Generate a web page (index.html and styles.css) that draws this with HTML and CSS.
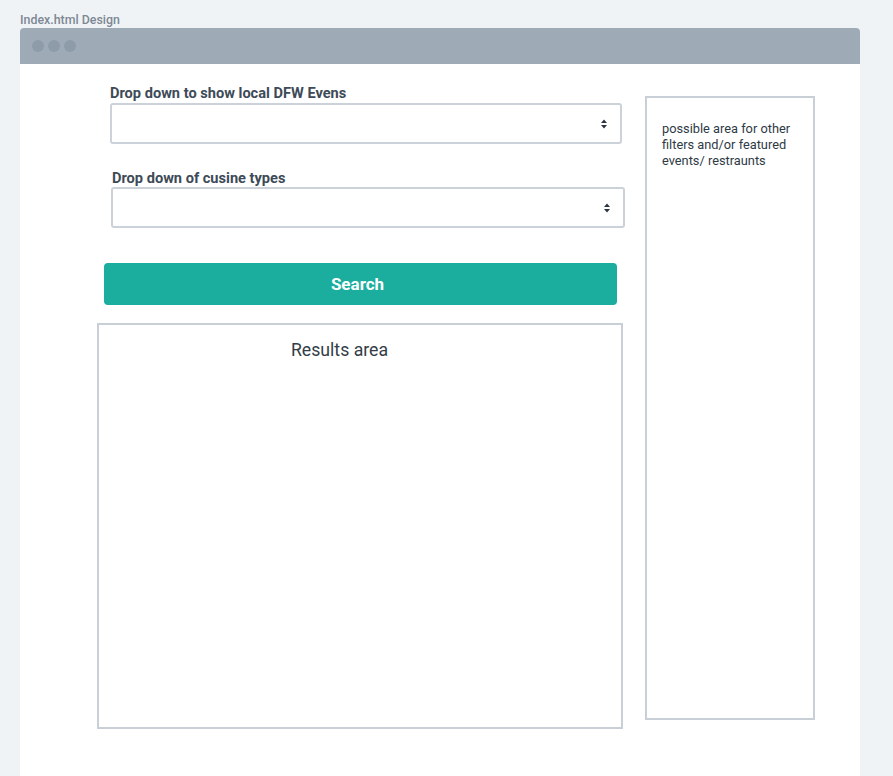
FILE: index.html
```html
<!DOCTYPE html>
<html>
<head>
<meta charset="utf-8">
<title>Index.html Design</title>
<link rel="stylesheet" href="styles.css">
</head>
<body>
<div class="page-title">Index.html Design</div>
<div class="window">
  <div class="titlebar">
    <span class="dot"></span><span class="dot"></span><span class="dot"></span>
  </div>
  <div class="window-body">
    <div class="main-col">
      <div class="label label-1">Drop down to show local DFW Evens</div>
      <div class="select select-1">
        <svg class="arrows" width="8" height="10" viewBox="0 0 8 10"><path d="M4 0.5 L7 4 L1 4 Z M1 6 L7 6 L4 9.5 Z" fill="#2c3440"/></svg>
      </div>
      <div class="label label-2">Drop down of cusine types</div>
      <div class="select select-2">
        <svg class="arrows" width="8" height="10" viewBox="0 0 8 10"><path d="M4 0.5 L7 4 L1 4 Z M1 6 L7 6 L4 9.5 Z" fill="#2c3440"/></svg>
      </div>
      <button class="search-btn">Search</button>
      <div class="results">
        <div class="results-title">Results area</div>
      </div>
    </div>
    <div class="sidebar">
      <p class="sidebar-text">possible area for other filters and/or featured events/ restraunts</p>
    </div>
  </div>
</div>
</body>
</html>
```

FILE: styles.css
```css
html, body {
  margin: 0;
  padding: 0;
}
body {
  background: #f0f3f6;
  font-family: Roboto, "Noto Sans", sans-serif;
  padding-top: 12px;
  overflow: hidden;
  height: 776px;
  box-sizing: border-box;
}
.page-title {
  margin-left: 20px;
  font-size: 12.4px;
  line-height: 16px;
  font-weight: 500;
  color: #7d8894;
}
.window {
  margin-left: 20px;
  width: 840px;
}
.titlebar {
  height: 36px;
  background: #9eabb7;
  border-radius: 4px 4px 0 0;
  display: flex;
  align-items: center;
  gap: 4px;
  padding-left: 12px;
}
.dot {
  width: 12px;
  height: 12px;
  border-radius: 50%;
  background: #8e9ba8;
}
.window-body {
  background: #ffffff;
  min-height: 712px;
  box-sizing: border-box;
  padding: 21px 0 0 77px;
  display: grid;
  grid-template-columns: 526px 170px;
  column-gap: 22px;
  align-items: start;
}
.main-col {
  display: flex;
  flex-direction: column;
  align-items: flex-start;
}
.label {
  font-size: 14.6px;
  line-height: 17px;
  font-weight: 700;
  color: #3d4a57;
}
.label-1 { margin-left: 13px; }
.label-2 { margin-left: 15px; margin-top: 26px; }
.select {
  height: 41px;
  box-sizing: border-box;
  border: 2px solid #cbd2d9;
  border-radius: 3px;
  display: flex;
  align-items: center;
  justify-content: flex-end;
  padding-right: 12px;
  background: #fff;
}
.select-1 { margin-left: 13px; width: 512px; margin-top: 1px; }
.select-2 { margin-left: 14px; width: 514px; }
.arrows { display: block; }
.search-btn {
  margin-top: 35px;
  margin-left: 7px;
  width: 513px;
  height: 42px;
  border: none;
  border-radius: 4px;
  background: #1bae9f;
  color: #ffffff;
  font-family: inherit;
  font-size: 17px;
  font-weight: 700;
  padding: 0 6px 0 0;
  cursor: pointer;
}
.results {
  margin-top: 18px;
  width: 526px;
  height: 406px;
  box-sizing: border-box;
  border: 2px solid #c8cfd7;
}
.results-title {
  padding: 14px 41px 0 0;
  text-align: center;
  font-size: 17.7px;
  line-height: 22px;
  color: #333d47;
}
.sidebar {
  margin-top: 11px;
  width: 170px;
  height: 624px;
  box-sizing: border-box;
  border: 2px solid #c8cfd7;
  padding: 23px 10px 0 15px;
}
.sidebar-text {
  margin: 0;
  font-size: 12.8px;
  line-height: 16px;
  color: #2f3a45;
}
```
